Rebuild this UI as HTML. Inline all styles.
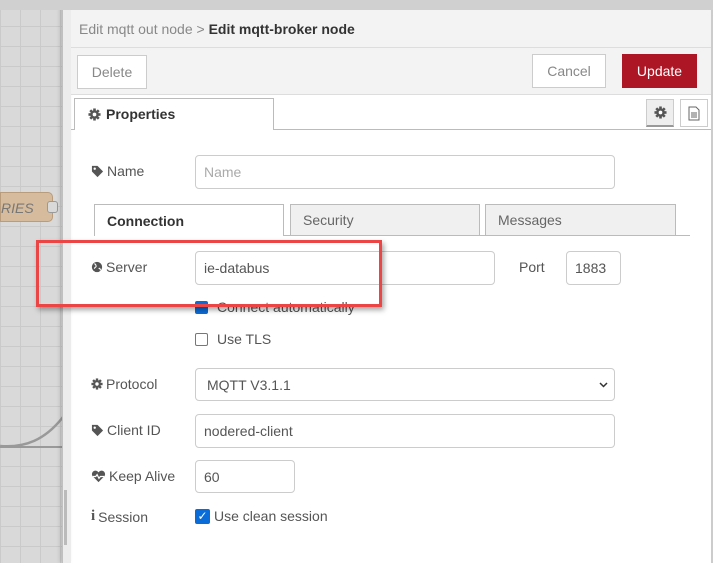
<!DOCTYPE html>
<html><head><style>
*{box-sizing:border-box;margin:0;padding:0}
body{width:713px;height:563px;overflow:hidden;position:relative;font-family:"Liberation Sans",Arial,sans-serif;font-size:14px;color:#555;background:#fff}
.abs{position:absolute}
.canvas{left:0;top:0;width:63px;height:563px;background-color:#d9d9d9;background-image:linear-gradient(#cacaca 1px,transparent 1px),linear-gradient(90deg,#cacaca 1px,transparent 1px);background-size:20px 20px;background-position:0 6px}
.inp{position:absolute;border:1px solid #ccc;border-radius:4px;background:#fff;padding-left:8px;display:flex;align-items:center;font-size:14px;color:#555}
.lbl{position:absolute;font-size:14px;color:#555;display:flex;align-items:center;gap:3px}
.lbl svg{flex:none}
.btn{position:absolute;border:1px solid #ccc;background:#fff;display:flex;align-items:center;justify-content:center;font-size:14px;color:#888}
.tab{position:absolute;border:1px solid #bbb;border-bottom:none;background:#f0f0f0;font-size:14px;color:#666;padding-left:12px;display:flex;align-items:center}
.cb{position:absolute;width:13px;height:13px;border-radius:2px}
</style></head><body>
<svg width="0" height="0" style="position:absolute">
<defs>
<symbol id="tag" viewBox="0 0 14 14"><path d="M1 1h6l6 6-6 6-6-6z" fill="#555"/><circle cx="4" cy="4" r="1.3" fill="#fff"/></symbol>
<symbol id="gear" viewBox="0 0 14 14"><g fill="#555"><circle cx="7" cy="7" r="4.6"/><rect x="5.6" y="0.5" width="2.8" height="13"/><rect x="0.5" y="5.6" width="13" height="2.8"/><rect x="5.6" y="0.5" width="2.8" height="13" transform="rotate(45 7 7)"/><rect x="5.6" y="0.5" width="2.8" height="13" transform="rotate(-45 7 7)"/></g><circle cx="7" cy="7" r="2" fill="#fff"/></symbol>
<symbol id="globe" viewBox="0 0 14 14"><circle cx="7" cy="7" r="6" fill="#555"/><path d="M4 3c1 1 2 1 2 3s-2 1-2 3M9 9c1-1 2 0 2 2" stroke="#fff" stroke-width="1.3" fill="none"/></symbol>
<symbol id="heart" viewBox="0 0 16 14"><path d="M8 13L1.5 6.5A3.5 3.5 0 0 1 8 2.5a3.5 3.5 0 0 1 6.5 4z" fill="#555"/><path d="M2 7h3l1.5-2 2 4 1.5-2h4" stroke="#fff" stroke-width="1.3" fill="none"/></symbol>
</defs></svg>
<div class="abs canvas"></div>
<div class="abs" style="left:0;top:192px;width:53px;height:30px;background:#d6bc9d;border:1px solid #b89c7c;border-radius:0 5px 5px 0;font-style:italic;color:#777;font-size:14px;padding:7px 0 0 0">RIES</div>
<div class="abs" style="left:47px;top:201px;width:11px;height:12px;background:#d9d9d9;border:1px solid #999;border-radius:3px"></div>
<svg class="abs" style="left:0;top:400px" width="63" height="60"><path d="M0 46 C25 48 45 40 63 17" stroke="#999" stroke-width="2.5" fill="none"/><path d="M0 47 H63" stroke="#999" stroke-width="2" fill="none"/></svg>
<div class="abs" style="left:62px;top:0;width:9px;height:563px;background:#ececec;border-left:1px solid #c0c0c0;box-shadow:-2px 0 4px rgba(0,0,0,.15)"></div>
<div class="abs" style="left:64px;top:490px;width:3px;height:55px;background:#bbb"></div>
<div class="abs" style="left:0;top:0;width:713px;height:10px;background:#d0d0d0"></div>
<div class="abs" style="left:71px;top:10px;width:642px;height:85px;background:#f3f3f3;border-bottom:1px solid #ddd"></div>
<div class="abs" style="left:71px;top:47px;width:642px;height:1px;background:#ddd"></div>
<div class="abs" style="left:711px;top:10px;width:2px;height:553px;background:#ccc"></div>
<div class="abs" style="left:79px;top:21px;font-size:14px;color:#888">Edit mqtt out node &gt; <b style="color:#333">Edit mqtt-broker node</b></div>
<div class="btn" style="left:77px;top:55px;width:70px;height:34px">Delete</div>
<div class="btn" style="left:532px;top:54px;width:74px;height:34px">Cancel</div>
<div class="btn" style="left:622px;top:54px;width:75px;height:34px;background:#ad1625;border-color:#ad1625;color:#fff">Update</div>
<div class="abs" style="left:71px;top:129px;width:640px;height:1px;background:#bbb"></div>
<div class="abs" style="left:74px;top:98px;width:200px;height:32px;background:#fff;border:1px solid #bbb;border-bottom:none;font-weight:bold;color:#333;padding:7px 0 0 13px;display:flex;gap:5px;align-items:flex-start"><svg width="13" height="13" style="margin-top:2px"><use href="#gear"/></svg>Properties</div>
<div class="abs" style="left:646px;top:99px;width:28px;height:28px;background:#eee;border:1px solid #ccc;border-bottom:2px solid #999;display:flex;align-items:center;justify-content:center"><svg width="13" height="13"><use href="#gear"/></svg></div>
<div class="abs" style="left:680px;top:99px;width:28px;height:28px;background:#fff;border:1px solid #ccc;display:flex;align-items:center;justify-content:center"><svg width="12" height="15" viewBox="0 0 12 15"><path d="M1 1h7l3 3v10H1z" fill="none" stroke="#666"/><path d="M3 7h6M3 9h6M3 11h6" stroke="#666"/></svg></div>
<div class="lbl" style="left:91px;top:163px"><svg width="13" height="13"><use href="#tag"/></svg>Name</div>
<div class="inp" style="left:195px;top:155px;width:420px;height:34px;color:#aaa">Name</div>
<div class="tab" style="left:94px;top:204px;width:190px;height:32px;background:#fff;font-weight:bold;color:#333">Connection</div>
<div class="tab" style="left:290px;top:204px;width:190px;height:31px">Security</div>
<div class="tab" style="left:485px;top:204px;width:191px;height:31px">Messages</div>
<div class="abs" style="left:284px;top:235px;width:406px;height:1px;background:#bbb"></div>
<div class="lbl" style="left:91px;top:259px"><svg width="12" height="12"><use href="#globe"/></svg>Server</div>
<div class="inp" style="left:195px;top:251px;width:300px;height:34px">ie-databus</div>
<div class="lbl" style="left:519px;top:259px">Port</div>
<div class="inp" style="left:566px;top:251px;width:55px;height:34px">1883</div>
<div class="cb" style="left:195px;top:301px;background:#0a6cd8"></div>
<div class="lbl" style="left:217px;top:299px">Connect automatically</div>
<div class="cb" style="left:195px;top:333px;border:1px solid #777;background:#fff"></div>
<div class="lbl" style="left:217px;top:331px">Use TLS</div>
<div class="lbl" style="left:91px;top:376px"><svg width="12" height="12"><use href="#gear"/></svg>Protocol</div>
<div class="inp" style="left:195px;top:368px;width:420px;height:33px;padding-left:11px">MQTT V3.1.1<svg style="position:absolute;right:6px" width="9" height="6"><path d="M1 1l3.5 3.5L8 1" stroke="#333" stroke-width="1.5" fill="none"/></svg></div>
<div class="lbl" style="left:91px;top:422px"><svg width="13" height="13"><use href="#tag"/></svg>Client ID</div>
<div class="inp" style="left:195px;top:414px;width:420px;height:34px">nodered-client</div>
<div class="lbl" style="left:91px;top:468px"><svg width="15" height="13"><use href="#heart"/></svg>Keep Alive</div>
<div class="inp" style="left:195px;top:460px;width:100px;height:33px">60</div>
<div class="lbl" style="left:91px;top:508px"><b style="font-family:'Liberation Serif',serif;font-size:15px">i</b> Session</div>
<div class="cb" style="left:195px;top:509px;width:15px;height:15px;background:#0a6cd8;color:#fff;font-size:12px;line-height:15px;text-align:center">✓</div>
<div class="lbl" style="left:214px;top:508px">Use clean session</div>
<div class="abs" style="left:36px;top:240px;width:346px;height:67px;border:3px solid #ec4545;box-shadow:2px 3px 5px rgba(0,0,0,.35)"></div>
</body></html>
